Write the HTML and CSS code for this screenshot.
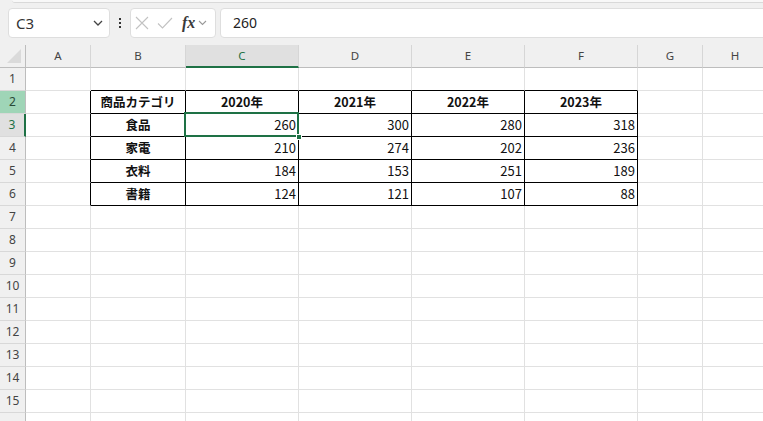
FILE: index.html
```html
<!DOCTYPE html>
<html lang="ja">
<head>
<meta charset="utf-8">
<link rel="stylesheet" href="styles.css">
</head>
<body>
<div class="app">
  <div class="ribbon-edge"></div>
  <div class="toolbar">
    <div class="namebox">
      <span class="nb-text">C3</span>
      <svg class="nb-chev" width="10" height="6" viewBox="0 0 10 6"><path d="M1 1 L5 5 L9 1" fill="none" stroke="#444" stroke-width="1.3"/></svg>
    </div>
    <div class="dots"><i></i><i></i><i></i></div>
    <div class="fxbox">
      <svg class="ic" width="14" height="14" viewBox="0 0 14 14"><path d="M1 1 L13 13 M13 1 L1 13" stroke="#c2c2c2" stroke-width="1.1" fill="none"/></svg>
      <svg class="ic" width="16" height="14" viewBox="0 0 16 14"><path d="M1 7.5 L5.5 12 L15 2" stroke="#c2c2c2" stroke-width="1.1" fill="none"/></svg>
      <span class="fx">fx</span>
      <svg class="fx-chev" width="9" height="6" viewBox="0 0 9 6"><path d="M1 1 L4.5 4.5 L8 1" fill="none" stroke="#999" stroke-width="1.1"/></svg>
    </div>
    <div class="formula">260</div>
  </div>
  <div class="sheet">
    <!-- header row -->
    <div class="corner"><svg width="16" height="16" viewBox="0 0 16 16"><polygon points="15,1 15,15 1,15" fill="#dadada"/></svg></div>
    <div class="ch">A</div><div class="ch">B</div><div class="ch ch-sel">C</div><div class="ch">D</div><div class="ch">E</div><div class="ch">F</div><div class="ch">G</div><div class="ch">H</div>
    <!-- row 1 -->
    <div class="rh">1</div>
    <div class="c"></div><div class="c tb"></div><div class="c tb"></div><div class="c tb"></div><div class="c tb"></div><div class="c tb"></div><div class="c"></div><div class="c"></div>
    <!-- row 2 -->
    <div class="rh rh-act">2</div>
    <div class="c tr"></div><div class="c tr tb th">商品カテゴリ</div><div class="c tr tb th">2020年</div><div class="c tr tb th">2021年</div><div class="c tr tb th">2022年</div><div class="c tr tb th">2023年</div><div class="c"></div><div class="c"></div>
    <!-- row 3 -->
    <div class="rh rh-sel">3</div>
    <div class="c tr"></div><div class="c tr tb th">食品</div><div class="c tr tb num cell-sel">260<span class="sel"><span class="handle"></span></span></div><div class="c tr tb num">300</div><div class="c tr tb num">280</div><div class="c tr tb num">318</div><div class="c"></div><div class="c"></div>
    <!-- row 4 -->
    <div class="rh">4</div>
    <div class="c tr"></div><div class="c tr tb th">家電</div><div class="c tr tb num">210</div><div class="c tr tb num">274</div><div class="c tr tb num">202</div><div class="c tr tb num">236</div><div class="c"></div><div class="c"></div>
    <!-- row 5 -->
    <div class="rh">5</div>
    <div class="c tr"></div><div class="c tr tb th">衣料</div><div class="c tr tb num">184</div><div class="c tr tb num">153</div><div class="c tr tb num">251</div><div class="c tr tb num">189</div><div class="c"></div><div class="c"></div>
    <!-- row 6 -->
    <div class="rh">6</div>
    <div class="c tr"></div><div class="c tr tb th">書籍</div><div class="c tr tb num">124</div><div class="c tr tb num">121</div><div class="c tr tb num">107</div><div class="c tr tb num">88</div><div class="c"></div><div class="c"></div>
    <!-- rows 7-16 -->
    <div class="rh">7</div><div class="c"></div><div class="c"></div><div class="c"></div><div class="c"></div><div class="c"></div><div class="c"></div><div class="c"></div><div class="c"></div>
    <div class="rh">8</div><div class="c"></div><div class="c"></div><div class="c"></div><div class="c"></div><div class="c"></div><div class="c"></div><div class="c"></div><div class="c"></div>
    <div class="rh">9</div><div class="c"></div><div class="c"></div><div class="c"></div><div class="c"></div><div class="c"></div><div class="c"></div><div class="c"></div><div class="c"></div>
    <div class="rh">10</div><div class="c"></div><div class="c"></div><div class="c"></div><div class="c"></div><div class="c"></div><div class="c"></div><div class="c"></div><div class="c"></div>
    <div class="rh">11</div><div class="c"></div><div class="c"></div><div class="c"></div><div class="c"></div><div class="c"></div><div class="c"></div><div class="c"></div><div class="c"></div>
    <div class="rh">12</div><div class="c"></div><div class="c"></div><div class="c"></div><div class="c"></div><div class="c"></div><div class="c"></div><div class="c"></div><div class="c"></div>
    <div class="rh">13</div><div class="c"></div><div class="c"></div><div class="c"></div><div class="c"></div><div class="c"></div><div class="c"></div><div class="c"></div><div class="c"></div>
    <div class="rh">14</div><div class="c"></div><div class="c"></div><div class="c"></div><div class="c"></div><div class="c"></div><div class="c"></div><div class="c"></div><div class="c"></div>
    <div class="rh">15</div><div class="c"></div><div class="c"></div><div class="c"></div><div class="c"></div><div class="c"></div><div class="c"></div><div class="c"></div><div class="c"></div>
    <div class="rh"></div><div class="c"></div><div class="c"></div><div class="c"></div><div class="c"></div><div class="c"></div><div class="c"></div><div class="c"></div><div class="c"></div>
  </div>
</div>
</body>
</html>
```

FILE: styles.css
```css
html, body {
  margin: 0;
  padding: 0;
  width: 763px;
  height: 421px;
  overflow: hidden;
  background: #f0f0f0;
}
.app {
  width: 763px;
  height: 421px;
  overflow: hidden;
  font-family: "Noto Sans", "Noto Sans CJK JP", sans-serif;
}
.ribbon-edge {
  height: 2px;
  margin-left: 12px;
  background: #f8f8f8;
  border-bottom: 1px solid #d9d9d9;
  border-bottom-left-radius: 3px;
}
.toolbar {
  display: flex;
  align-items: flex-start;
  height: 42px;
  padding: 5px 0 0 8px;
  box-sizing: border-box;
}
.namebox {
  width: 102px;
  height: 30px;
  box-sizing: border-box;
  background: #fff;
  border: 1px solid #dedede;
  border-radius: 4px;
  display: flex;
  align-items: center;
  justify-content: space-between;
  padding: 0 6px 0 7px;
}
.nb-text {
  font-size: 15px;
  color: #333;
}
.nb-chev {
  display: block;
}
.dots {
  width: 20px;
  height: 30px;
  display: flex;
  flex-direction: column;
  align-items: center;
  justify-content: center;
  gap: 2px;
}
.dots i {
  display: block;
  width: 2px;
  height: 2px;
  background: #333;
}
.fxbox {
  width: 86px;
  height: 30px;
  box-sizing: border-box;
  background: #fff;
  border: 1px solid #dedede;
  border-radius: 4px;
  display: flex;
  align-items: center;
  padding-left: 4px;
  gap: 8px;
}
.ic {
  display: block;
}
.fx {
  font-family: "Liberation Serif", serif;
  font-style: italic;
  font-weight: bold;
  font-size: 16px;
  color: #3a3a3a;
  margin-left: 1px;
  margin-right: -5px;
}
.fx-chev {
  display: block;
}
.formula {
  flex: 1;
  margin-left: 4px;
  margin-right: -10px;
  height: 30px;
  box-sizing: border-box;
  background: #fff;
  border: 1px solid #dedede;
  border-radius: 4px;
  font-size: 14px;
  color: #222;
  line-height: 28px;
  padding-left: 12px;
}
.sheet {
  display: grid;
  grid-template-columns: 26px 65px 95px 113px 113px 113px 113px 65px 65px;
  grid-auto-rows: 23px;
  background: #fff;
  height: 376px;
  overflow: hidden;
}
.sheet > div {
  box-sizing: border-box;
}
.corner {
  background: #f0f0f0;
  border-right: 1px solid #bdbdbd;
  border-bottom: 1px solid #bdbdbd;
  display: flex;
  align-items: flex-end;
  justify-content: flex-end;
  padding: 0 3px 3px 0;
}
.corner svg {
  display: block;
}
.ch {
  background: #f0f0f0;
  border-right: 1px solid #d6d6d6;
  border-bottom: 1px solid #bdbdbd;
  font-size: 11.5px;
  color: #444;
  text-align: center;
  line-height: 22px;
}
.ch-sel {
  background: #e0e0e0;
  color: #1e7145;
  border-bottom: 2px solid #1e7145;
}
.rh {
  background: #f0f0f0;
  border-right: 1px solid #bdbdbd;
  border-bottom: 1px solid #d8d8d8;
  font-size: 12px;
  color: #444;
  text-align: center;
  line-height: 22px;
}
.rh-act {
  background: #9fd5b7;
  color: #2a4a38;
}
.rh-sel {
  background: #e0e0e0;
  color: #1e7145;
  border-right: 2px solid #1e7145;
}
.c {
  border-right: 1px solid #e1e1e1;
  border-bottom: 1px solid #e1e1e1;
  font-family: "Noto Sans CJK JP", sans-serif;
  font-size: 13px;
  line-height: 22px;
  color: #111;
}
.c.tb {
  border-bottom-color: #000;
}
.c.tr {
  border-right-color: #000;
}
.th {
  font-weight: bold;
  text-align: center;
  font-size: 12.5px;
}
.num {
  text-align: right;
  padding-right: 2px;
}
.cell-sel {
  position: relative;
}
.sel {
  position: absolute;
  left: -2px;
  top: -2px;
  right: -1px;
  bottom: -1px;
  border: 2px solid #1e7145;
  pointer-events: none;
}
.handle {
  position: absolute;
  right: -5px;
  bottom: -5px;
  width: 6px;
  height: 6px;
  background: #1e7145;
  border: 1px solid #fff;
  box-sizing: border-box;
}
```
